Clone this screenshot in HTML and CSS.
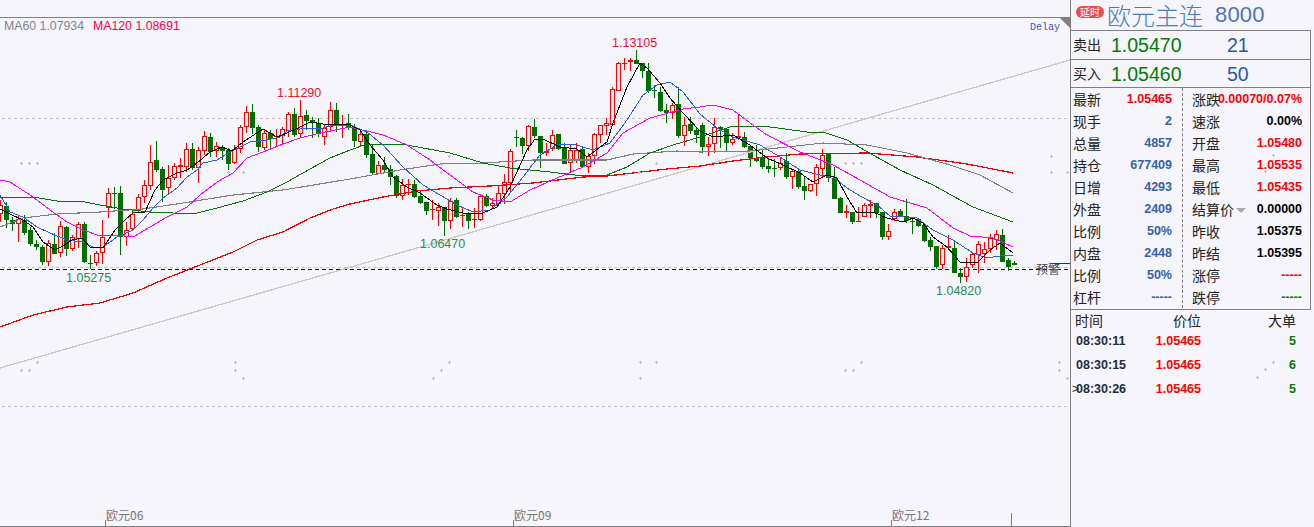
FILE: index.html
```html
<!DOCTYPE html>
<html lang="zh">
<head>
<meta charset="utf-8">
<title>欧元主连 8000</title>
<link rel="stylesheet" href="styles.css">
</head>
<body>
<main class="terminal">
  <section class="chart">
    <svg id="plot" class="plot" width="1070" height="527" viewBox="0 0 1070 527">
      <g id="grid"></g>
      <g id="candles"></g>
      <g id="lines"></g>
      <polygon class="corner" points="1060,18 1070,18 1070,28"></polygon>
      <text class="ma ma60" x="4" y="30">MA60 1.07934</text>
      <text class="ma ma120" x="93" y="30">MA120 1.08691</text>
      <text class="delay" x="1030" y="30">Delay</text>
      <text class="peak up" x="277" y="97">1.11290</text>
      <text class="peak up" x="612" y="47">1.13105</text>
      <text class="peak down" x="420" y="248">1.06470</text>
      <text class="peak down" x="66" y="282">1.05275</text>
      <text class="peak down" x="936" y="295">1.04820</text>
      <text class="alert" x="1036" y="274">预警</text>
      <text class="axis" x="106" y="520">欧元06</text>
      <text class="axis" x="514" y="520">欧元09</text>
      <text class="axis" x="892" y="520">欧元12</text>
    </svg>
  </section>

  <aside class="panel">
    <header class="title">
      <span class="badge">延时</span>
      <span class="name">欧元主连</span>
      <span class="code">8000</span>
    </header>

    <div class="quote"><span class="quote-label">卖出</span><span class="quote-price">1.05470</span><span class="quote-size">21</span></div>
    <div class="quote"><span class="quote-label">买入</span><span class="quote-price">1.05460</span><span class="quote-size">50</span></div>

    <div class="stats">
      <div class="stats-col stats-left">
        <div class="row"><span>最新</span><b class="red">1.05465</b></div>
        <div class="row"><span>现手</span><b class="blue">2</b></div>
        <div class="row"><span>总量</span><b class="blue">4857</b></div>
        <div class="row"><span>持仓</span><b class="blue">677409</b></div>
        <div class="row"><span>日增</span><b class="blue">4293</b></div>
        <div class="row"><span>外盘</span><b class="blue">2409</b></div>
        <div class="row"><span>比例</span><b class="blue">50%</b></div>
        <div class="row"><span>内盘</span><b class="blue">2448</b></div>
        <div class="row"><span>比例</span><b class="blue">50%</b></div>
        <div class="row"><span>杠杆</span><b class="blue">-----</b></div>
      </div>
      <div class="stats-col stats-right">
        <div class="row"><span>涨跌</span><b class="red">0.00070/0.07%</b></div>
        <div class="row"><span>速涨</span><b class="black">0.00%</b></div>
        <div class="row"><span>开盘</span><b class="red">1.05480</b></div>
        <div class="row"><span>最高</span><b class="red">1.05535</b></div>
        <div class="row"><span>最低</span><b class="red">1.05435</b></div>
        <div class="row"><span class="settle">结算价<i class="caret"></i></span><b class="black">0.00000</b></div>
        <div class="row"><span>昨收</span><b class="black">1.05375</b></div>
        <div class="row"><span>昨结</span><b class="black">1.05395</b></div>
        <div class="row"><span>涨停</span><b class="red">-----</b></div>
        <div class="row"><span>跌停</span><b class="green">-----</b></div>
      </div>
    </div>

    <div class="trades">
      <div class="trade-head"><span>时间</span><span>价位</span><span>大单</span></div>
      <div class="trade"><b class="time">08:30:11</b><b class="red">1.05465</b><b class="green">5</b></div>
      <div class="trade"><b class="time">08:30:15</b><b class="red">1.05465</b><b class="green">6</b></div>
      <div class="trade"><b class="time current">08:30:26</b><b class="red">1.05465</b><b class="green">5</b></div>
    </div>
  </aside>
  <svg id="specks" class="specks" width="1314" height="527" viewBox="0 0 1314 527"></svg>
</main>
<script src="chart.js"></script>
</body>
</html>
```
FILE: styles.css
```css
* { box-sizing: border-box; }
html, body { margin: 0; padding: 0; }
body {
  background: #f5f5fb;
  font-family: "Liberation Sans", "Noto Sans CJK SC", sans-serif;
  overflow: hidden;
}
.terminal {
  position: relative;
  display: flex;
  width: 1314px;
  height: 527px;
  overflow: hidden;
}
.chart { flex: 0 0 1070px; height: 527px; }
.plot { display: block; }
.specks { position: absolute; left: 0; top: 0; pointer-events: none; }

.frame { fill: #808080; }
.dash-grey { stroke: #c4c4c8; stroke-width: 1; stroke-dasharray: 3 3; }
.dash-black { stroke: #111; stroke-width: 1; stroke-dasharray: 4 3; }
.tick { stroke: #808080; stroke-width: 1; }
.alert-line { stroke: #1a2a90; stroke-width: 1; }
.corner { fill: #808080; }
.speck { stroke: #c0c0c4; stroke-width: 1; fill: none; }

.bull { fill: #ff0000; }
.bear { fill: #006f00; }
.hollow { fill: #f5f5fb; stroke: #ff0000; stroke-width: 1; }

.ln { fill: none; stroke-width: 1; stroke-linejoin: round; shape-rendering: crispEdges; }
.ln-trend { stroke: #cdc8c0; stroke-width: 1.3; }
.ln-120 { stroke: #f20000; stroke-width: 1.25; }
.ln-60 { stroke: #808080; stroke-width: 1.1; }
.ln-30 { stroke: #0a720a; }
.ln-20 { stroke: #ff00ff; }
.ln-10 { stroke: #3060d8; }
.ln-5 { stroke: #000; }

.ma { font-size: 12.3px; }
.ma60 { fill: #83838f; }
.ma120 { fill: #f5004a; }
.delay { font-family: "Liberation Mono", monospace; font-size: 10px; fill: #3b5bb0; }
.peak { font-size: 12.5px; }
.peak.up { fill: #f01030; }
.peak.down { fill: #2f8a50; }
.alert { font-family: "Noto Sans CJK SC", sans-serif; font-size: 12px; fill: #444; }
.axis { font-family: "Noto Sans CJK SC", sans-serif; font-size: 12px; fill: #777; }

.panel {
  flex: 0 0 241px;
  height: 527px;
  display: flex;
  flex-direction: column;
  border-left: 1px solid #808080;
  font-family: "Noto Sans CJK SC", "Liberation Sans", sans-serif;
  color: #222;
}
.title {
  height: 31px;
  display: flex;
  align-items: center;
  padding-left: 5px;
  border-bottom: 1px solid #808080;
}
.badge {
  width: 28px;
  height: 12px;
  margin-bottom: 7px;
  border-radius: 6px;
  background: #ee4b50;
  color: #fff;
  font-size: 10px;
  line-height: 12px;
  text-align: center;
}
.name { margin-left: 3px; font-size: 24px; line-height: 26px; color: #4f7cb8; font-weight: 300; }
.code { margin-left: 12px; font-family: "Liberation Sans", sans-serif; font-size: 22px; line-height: 26px; color: #4f74b4; letter-spacing: .2px; }

.quote {
  height: 28.5px;
  display: flex;
  align-items: center;
  padding-left: 2px;
  border-bottom: 1px solid #808080;
  border-right: 1px solid #808080;
}
.quote-label { width: 38px; font-size: 14px; line-height: 18px; margin-top: -1px; }
.quote-price { width: 116px; font-family: "Liberation Sans", sans-serif; font-size: 19.5px; color: #067a06; padding-top: 2px; }
.quote-size { font-family: "Liberation Sans", sans-serif; font-size: 19.5px; color: #2a58a8; padding-top: 2px; }

.stats {
  display: flex;
  height: 222px;
  border-bottom: 1px solid #808080;
  border-right: 1px solid #808080;
}
.stats-col { display: flex; flex-direction: column; height: 220px; }
.stats-left { width: 112px; padding: 0 10px 0 2px; border-right: 1px dashed #808080; }
.stats-right { flex: 1; padding: 0 8px 0 9px; }
.row {
  height: 22px;
  display: flex;
  align-items: center;
  justify-content: space-between;
  font-size: 14px;
  line-height: 18px;
  white-space: nowrap;
}
.row b, .trade b { font-family: "Liberation Sans", sans-serif; font-size: 12.5px; font-weight: 700; }
.settle { display: flex; align-items: center; }
.caret {
  width: 0;
  height: 0;
  margin: 3px 0 0 2px;
  border-left: 5px solid transparent;
  border-right: 5px solid transparent;
  border-top: 5px solid #aaa;
}
.stats-right .row:first-child b { margin-left: -4px; }
.red { color: #ff0000; }
.blue { color: #3462aa; }
.black { color: #000; }
.green { color: #067a06; }

.trades { padding: 0 15px 0 4px; }
.trade-head, .trade {
  display: grid;
  grid-template-columns: 72px 54px 1fr;
  align-items: center;
}
.trade-head { height: 19px; padding-top: 2px; font-size: 14px; line-height: 17px; }
.trade-head span:nth-child(2) { padding-left: 26px; grid-column: 2; white-space: nowrap; }
.trade-head span:nth-child(3) { justify-self: end; }
.trade { height: 24px; }
.trade b:nth-child(2) { justify-self: end; }
.trade b:nth-child(3) { justify-self: end; }
.time { color: #1c2c44; padding-left: 1px; position: relative; }
.current::before {
  content: ">";
  position: absolute;
  left: -3px;
  color: #1c2c44;
  font-weight: 400;
}
```
FILE: chart.js
```js
var NS = "http://www.w3.org/2000/svg";
function el(parent, tag, attrs) {
  var n = document.createElementNS(NS, tag);
  for (var k in attrs) n.setAttribute(k, attrs[k]);
  parent.appendChild(n);
  return n;
}

/* x, colour (1 red / 0 green), body top, body bottom, wick top, wick bottom */
var C = [
[0,1,205,214,200,222],[6,0,206,220,202,228],[12,0,220,224,217,231],[18,1,219,224,215,242],[24,0,220,233,215,235],
[30,0,230,244,227,246],[36,0,244,247,240,250],[42,0,247,262,245,265],[48,1,243,262,240,266],[54,0,244,254,233,254],
[60,1,226,253,221,257],[66,0,227,249,226,256],[72,1,237,249,235,251],[78,1,224,239,222,248],[84,0,224,262,222,263],
[90,0,263,264,255,269],[96,1,253,263,251,266],[102,1,237,253,220,264],[108,1,193,208,188,218],[114,0,193,194,187,209],
[120,0,193,237,186,255],[126,1,230,237,222,246],[132,1,214,229,209,231],[138,1,197,211,194,213],[144,1,185,197,180,203],
[150,1,162,186,145,190],[156,0,160,170,141,172],[162,0,169,190,167,202],[168,1,178,188,165,194],[174,1,166,178,163,180],
[180,1,165,167,158,178],[186,1,149,167,143,172],[192,0,149,168,143,170],[198,1,150,168,147,183],[204,1,136,151,131,155],
[210,0,137,152,133,157],[216,1,146,151,142,157],[222,0,147,151,145,160],[228,0,150,164,148,170],[234,1,149,163,145,164],
[240,1,127,149,125,153],[246,1,112,127,106,133],[252,0,112,128,104,134],[258,0,127,147,125,152],[264,1,133,148,130,150],
[270,0,133,139,130,150],[276,1,136,137,129,147],[282,1,129,136,127,145],[288,1,114,131,112,137],[294,0,114,135,108,137],
[300,1,116,134,100,137],[306,0,115,121,110,130],[312,0,120,123,117,138],[318,0,123,134,118,137],[324,1,128,137,124,145],
[330,1,110,127,102,132],[336,0,110,124,103,132],[342,1,124,125,115,138],[348,0,123,128,114,130],
[354,0,128,141,124,147],[360,1,134,142,130,147],[366,0,134,155,130,158],[372,0,154,173,145,174],[378,1,165,174,161,174],
[384,0,165,170,157,173],[390,0,169,177,165,185],[396,0,176,196,175,198],[402,1,185,196,179,200],[408,1,184,185,179,195],
[414,0,184,197,180,198],[420,0,196,203,190,204],[426,0,202,211,202,215],[432,1,209,210,200,220],[438,1,207,211,203,226],
[444,0,207,221,207,236],[450,1,201,221,198,229],[456,0,200,217,198,218],[462,1,215,216,208,227],[468,0,214,221,212,229],
[474,1,219,220,208,228],[480,1,196,220,195,221],[486,0,196,206,194,207],[492,1,203,206,198,208],[498,1,193,204,185,205],
[504,1,182,194,174,204],[510,1,151,183,149,192],[516,0,137,138,130,147],[522,0,138,146,137,154],[528,1,126,146,125,151],
[534,0,127,136,119,138],[540,0,136,153,136,168],[546,1,151,153,143,156],[552,1,135,149,130,151],[558,0,134,149,134,150],
[564,0,148,164,143,164],[570,1,150,163,145,172],[576,1,150,161,143,163],[582,0,149,167,147,167],[588,1,156,167,153,173],
[594,1,134,156,133,164],[600,1,125,135,125,143],[606,1,123,126,118,135],[612,1,89,125,87,125],[618,1,63,91,62,91],
[624,1,63,64,58,70],[630,1,60,62,58,71],[636,0,60,64,50,64],[642,0,63,71,63,78],[648,0,71,91,63,93],
[654,0,90,91,85,98],[660,0,92,111,87,112],[666,0,110,113,104,123],[672,1,105,113,103,119],[678,0,104,136,87,138],
[684,1,125,136,117,146],[690,0,124,131,117,134],[696,0,130,135,127,143],
[702,0,125,147,123,153],[708,1,144,147,137,156],[714,1,127,144,118,153],[720,0,127,129,126,148],[726,0,129,143,128,151],
[732,1,139,143,133,145],[738,1,136,138,114,140],[744,0,137,147,132,148],[750,0,146,158,145,167],[756,0,158,161,145,162],
[762,0,158,167,148,169],[768,0,166,169,159,173],[774,0,168,169,159,177],[780,1,163,168,157,170],[786,0,161,177,153,179],
[792,1,171,177,170,189],[798,0,171,187,170,189],[804,0,186,191,177,200],[810,1,184,191,184,192],[816,1,167,184,164,196],
[822,1,155,169,149,178],[828,0,153,178,153,182],[834,0,178,199,167,199],[840,0,198,213,197,213],[846,1,211,213,205,218],
[852,0,212,222,212,224],[858,1,221,222,207,222],[864,1,205,217,203,217],[870,1,204,206,200,218],[876,0,203,213,203,218],
[882,0,212,237,212,240],[888,1,231,237,224,240],[894,1,212,219,209,221],[900,0,211,216,209,217],[906,0,216,221,199,223],
[912,0,221,222,218,234],[918,0,219,226,218,227],[924,0,225,241,223,242],[930,0,240,247,237,251],[936,0,246,267,246,269],
[942,1,248,265,245,269],[948,1,246,248,235,249],[954,0,248,273,241,273],[960,0,273,277,268,283],[966,1,267,277,258,282],
[972,1,254,265,253,268],[978,1,244,255,241,273],[984,1,249,254,242,263],[990,1,238,249,234,253],[996,1,234,240,230,250],
[1002,0,235,262,229,262],[1008,0,260,267,258,271],[1014,0,263,265,261,265]
];

var L = {
  "trend": "0,368 1070,60",
  "120": "0,327 33,315 67,307 100,303 133,293 167,278 200,265 233,252 257,240 283,232 310,218 333,209 350,204 383,197 417,191 450,188 490,186 533,183 583,177 607,176 633,173 667,169 700,166 733,161 767,157 800,154 867,153 917,157 967,164 1013,173",
  "60": "0,227 23,218 57,214 100,212 143,209 183,203 233,195 283,190 350,179 400,170 440,164 483,163 533,160 607,160 633,154 677,151 700,152 750,151 787,147 823,143 867,145 907,153 950,165 980,175 1013,193",
  "30": "0,197 33,197 57,201 80,201 100,205 123,209 150,212 173,213 197,213 217,208 243,201 267,192 287,182 310,169 330,158 350,150 367,144 407,145 450,153 483,163 510,168 550,172 583,176 607,175 627,167 650,153 673,145 700,137 733,126 763,126 807,132 823,132 847,140 873,155 900,170 933,185 973,207 1013,222",
  "20": "0,180 10,182 33,197 50,210 67,222 83,230 100,236 117,235 133,237 150,227 167,217 187,207 200,195 217,182 233,173 247,158 263,152 283,144 300,138 320,133 350,127 383,135 407,145 430,160 450,175 473,192 493,200 510,202 530,190 557,178 583,167 607,153 623,133 650,118 683,109 700,107 713,105 733,110 750,123 767,135 800,152 833,165 860,180 890,197 927,208 953,228 970,236 993,238 1013,247",
  "10": "0,195 10,212 23,217 37,227 50,233 67,240 83,242 93,247 103,247 117,237 133,230 143,220 153,208 163,198 177,188 187,177 197,170 203,163 217,160 230,152 250,142 267,140 280,137 287,131 307,128 320,129 333,125 350,125 367,132 383,145 403,167 423,185 440,195 457,205 473,212 490,210 507,197 523,177 540,155 557,145 573,144 593,150 610,143 627,120 643,95 657,85 670,82 683,92 700,114 717,128 733,137 760,145 780,157 800,170 820,175 833,177 847,188 860,196 877,205 890,216 917,218 933,230 953,240 973,253 987,258 1000,256 1013,255",
  "5": "0,209 12,215 23,220 33,227 43,242 55,250 63,246 72,240 82,238 90,247 103,248 115,230 125,220 133,213 145,212 155,190 163,180 177,173 187,170 197,163 210,152 222,147 232,151 243,142 263,129 277,137 287,133 300,127 310,122 323,124 350,125 360,130 370,145 383,160 393,177 407,187 420,193 437,205 447,209 467,214 483,213 497,207 510,187 527,150 535,139 543,139 560,147 577,149 587,157 607,142 613,123 627,87 640,63 647,68 660,83 670,98 683,113 700,131 713,137 733,135 750,145 767,158 783,165 800,173 813,182 827,175 837,178 847,197 857,213 873,212 887,218 903,222 913,218 923,223 933,237 947,247 960,262 977,263 990,250 1000,243 1013,253"
};

var SPECKS = [
[21,163],[29,163],[37,163],[228,172],[243,172],[449,156],[441,164],[441,172],[656,163],[639,172],[845,163],[853,163],[861,163],
[1051,156],[1051,172],[1067,172],[1273,155],[1265,171],
[37,362],[21,370],[29,370],[235,362],[235,370],[243,378],[449,362],[441,370],[433,378],[640,362],[656,362],[640,378],
[861,362],[845,370],[853,370],[1059,362],[1059,370],[1067,378],[1273,362],[1265,369],[1257,377]
];

var grid = document.getElementById("grid");
el(grid, "rect", {class: "frame", x: 0, y: 17, width: 1070, height: 1});
el(grid, "rect", {class: "frame", x: 0, y: 526, width: 1070, height: 1});
[[118, "dash-grey"], [267, "dash-grey"], [406, "dash-grey"]].forEach(function (d) {
  el(grid, "line", {class: d[1], x1: 2, x2: 1070, y1: d[0] + 0.5, y2: d[0] + 0.5});
});
el(grid, "line", {class: "dash-black", x1: 0, x2: 1070, y1: 269.5, y2: 269.5});
el(grid, "line", {class: "alert-line", x1: 1050, x2: 1070, y1: 263.5, y2: 263.5});
[[105, 520], [513, 520], [891, 520], [1011, 513]].forEach(function (t) {
  el(grid, "line", {class: "tick", x1: t[0] + 0.5, x2: t[0] + 0.5, y1: t[1], y2: 526});
});

var lines = document.getElementById("lines");
el(lines, "polyline", {class: "ln ln-trend", points: L.trend});
["120", "60", "30", "20", "10", "5"].forEach(function (k) {
  el(lines, "polyline", {class: "ln ln-" + k, points: L[k]});
});

var g = document.getElementById("candles");
g.setAttribute("shape-rendering", "crispEdges");
C.forEach(function (c) {
  var x = c[0], red = c[1], t = c[2], b = c[3], wt = c[4], wb = c[5];
  var cls = red ? "bull" : "bear";
  el(g, "rect", {class: cls, x: x, y: wt, width: 1, height: Math.max(1, wb - wt)});
  if (red && b - t > 2) {
    el(g, "rect", {class: "hollow", x: x - 1.5, y: t + 0.5, width: 4, height: b - t - 1});
  } else {
    el(g, "rect", {class: cls, x: x - 2, y: t, width: 5, height: Math.max(1, b - t)});
  }
});

var s = document.getElementById("specks");
SPECKS.forEach(function (p) {
  el(s, "path", {class: "speck", d: "M" + (p[0] - 1) + " " + (p[1] + 0.5) + "h3M" + (p[0] + 0.5) + " " + (p[1] - 1) + "v3"});
});
```
